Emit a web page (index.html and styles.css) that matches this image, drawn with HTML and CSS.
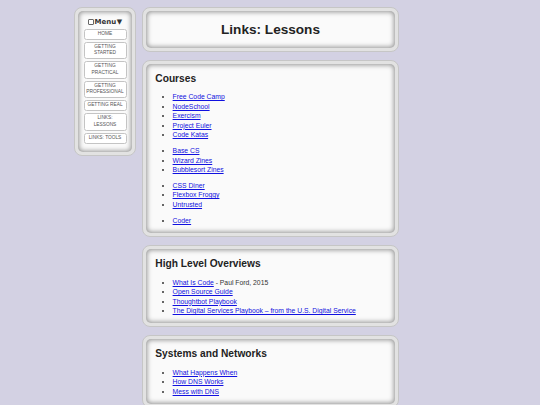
FILE: index.html
```html
<!DOCTYPE html>
<html lang="en">
<head>
<meta charset="utf-8">
<title>Links: Lessons</title>
<link rel="stylesheet" href="styles.css">
</head>
<body>
<div class="page">
  <nav class="card menu">
    <div class="card-inner menu-inner">
      <div class="menu-title"><span class="check"></span>Menu<span class="caret">▼</span></div>
      <a class="btn" href="#">HOME</a>
      <a class="btn" href="#">GETTING<br>STARTED</a>
      <a class="btn" href="#">GETTING<br>PRACTICAL</a>
      <a class="btn" href="#">GETTING<br>PROFESSIONAL</a>
      <a class="btn" href="#">GETTING REAL</a>
      <a class="btn" href="#">LINKS:<br>LESSONS</a>
      <a class="btn" href="#">LINKS: TOOLS</a>
    </div>
  </nav>
  <main class="main">
    <header class="card">
      <div class="card-inner header-inner">
        <h1>Links: Lessons</h1>
      </div>
    </header>
    <section class="card">
      <div class="card-inner">
        <h2>Courses</h2>
        <ul>
          <li><a href="#">Free Code Camp</a></li>
          <li><a href="#">NodeSchool</a></li>
          <li><a href="#">Exercism</a></li>
          <li><a href="#">Project Euler</a></li>
          <li><a href="#">Code Katas</a></li>
        </ul>
        <ul>
          <li><a href="#">Base CS</a></li>
          <li><a href="#">Wizard Zines</a></li>
          <li><a href="#">Bubblesort Zines</a></li>
        </ul>
        <ul>
          <li><a href="#">CSS Diner</a></li>
          <li><a href="#">Flexbox Froggy</a></li>
          <li><a href="#">Untrusted</a></li>
        </ul>
        <ul>
          <li><a href="#">Coder</a></li>
        </ul>
      </div>
    </section>
    <section class="card">
      <div class="card-inner">
        <h2>High Level Overviews</h2>
        <ul>
          <li><a href="#">What Is Code</a> - Paul Ford, 2015</li>
          <li><a href="#">Open Source Guide</a></li>
          <li><a href="#">Thoughtbot Playbook</a></li>
          <li><a href="#">The Digital Services Playbook – from the U.S. Digital Service</a></li>
        </ul>
      </div>
    </section>
    <section class="card">
      <div class="card-inner">
        <h2>Systems and Networks</h2>
        <ul>
          <li><a href="#">What Happens When</a></li>
          <li><a href="#">How DNS Works</a></li>
          <li><a href="#">Mess with DNS</a></li>
        </ul>
      </div>
    </section>
  </main>
</div>
</body>
</html>
```

FILE: styles.css
```css
html, body {
  margin: 0;
  padding: 0;
  background: #d3d1e3;
  font-family: "Liberation Sans", Arial, sans-serif;
  color: #222;
}

.page {
  display: flex;
  align-items: flex-start;
  gap: 6px;
  padding: 7px 0 0 74px;
}

.card {
  box-sizing: border-box;
  border: 1px solid #c6c6c6;
  border-radius: 8px;
  background: #e2e2e2;
  padding: 3px;
}

.card-inner {
  background: #fafafa;
  border-radius: 5px;
  box-shadow: inset 0 0 5px 1px rgba(0, 0, 0, 0.42);
  padding: 9.3px 9.3px 8px;
}

.main {
  width: 257px;
  display: flex;
  flex-direction: column;
  gap: 7.5px;
}

.header-inner {
  padding: 10.5px 9px;
}

h1 {
  margin: 0;
  font-size: 13.6px;
  line-height: 16px;
  text-align: center;
  font-weight: bold;
  color: #222;
}

h2 {
  margin: 0 0 7.6px;
  font-size: 10.2px;
  line-height: 12px;
  font-weight: bold;
  color: #222;
}

ul {
  margin: 0;
  padding-left: 17.3px;
  font-size: 6.8px;
  line-height: 9.4px;
  color: #333;
}

ul + ul {
  margin-top: 6.7px;
}

a {
  color: #1010e0;
}

/* Menu */
.menu {
  width: 62px;
}

.menu-inner {
  display: flex;
  flex-direction: column;
  align-items: center;
  padding: 7px 5px 6px;
}

.menu-title {
  display: flex;
  align-items: center;
  font-family: "DejaVu Sans", sans-serif;
  font-weight: bold;
  font-size: 7px;
  line-height: 8px;
  color: #333;
  margin-bottom: 2.6px;
}

.check {
  width: 4px;
  height: 4px;
  border: 0.8px solid #666;
  border-radius: 1px;
  background: #fff;
  margin-right: 0.6px;
}

.caret {
  font-size: 7px;
  margin-left: 0.5px;
}

.btn {
  box-sizing: border-box;
  width: 43px;
  display: block;
  text-align: center;
  text-decoration: none;
  color: #555;
  font-size: 4.8px;
  line-height: 6.5px;
  padding: 1.25px 0;
  border: 1px solid #c4c4c4;
  border-radius: 2.5px;
  background: #fff;
  margin-bottom: 2px;
}
```
